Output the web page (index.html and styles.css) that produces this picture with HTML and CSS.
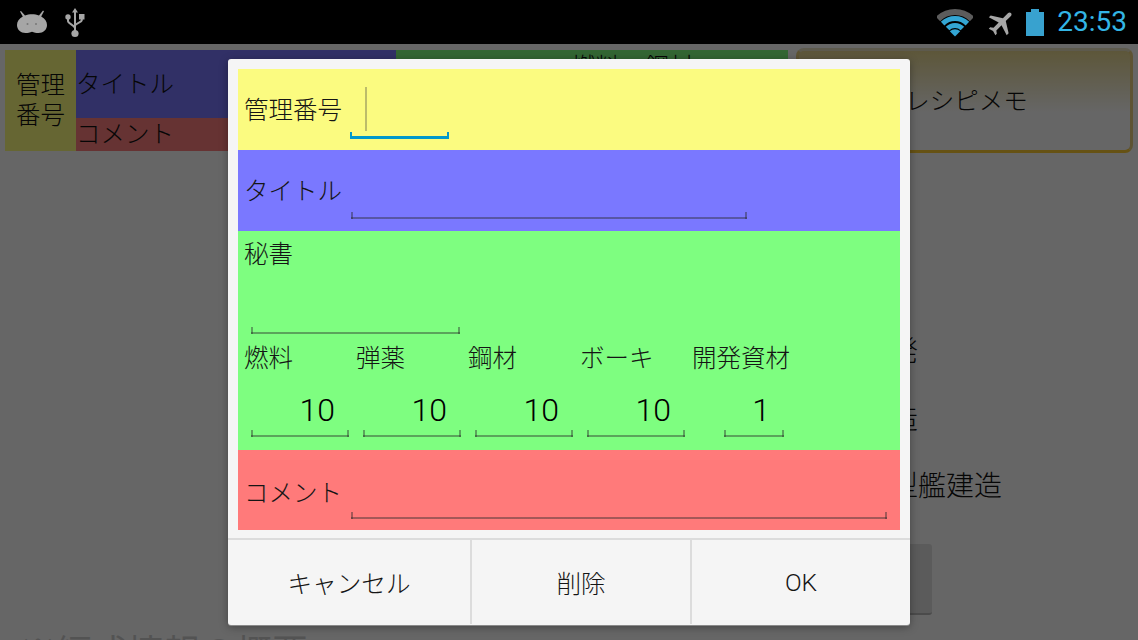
FILE: index.html
```html
<!DOCTYPE html>
<html lang="ja">
<head>
<meta charset="utf-8">
<title>レシピメモ</title>
<link rel="stylesheet" href="styles.css">
</head>
<body>
<header class="statusbar">
  <div class="status-left">
    <svg class="ico-android" width="32" height="24" viewBox="0 0 32 24"><path fill="#a6a6a6" d="M5 1l4 4.600C11 4.600 13.500 4.300 16 4.300s5 .3 7 1.300L27 .6l1 .6-2.800 5.400C29 8.600 31 11.600 31 15c0 4.800-3.800 8-8.500 8-2.400 0-4.500-.6-6.500-1.300-2 .7-4.100 1.300-6.500 1.300C4.800 23 1 19.800 1 15c0-3.400 2-6.400 5.800-8.400L4 1.600z"/><circle cx="11.500" cy="14" r="1" fill="#777"/><circle cx="20" cy="14" r="1" fill="#777"/></svg>
    <svg class="ico-usb" width="20" height="30" viewBox="0 0 20 30"><g fill="#a6a6a6"><path d="M10 0l3 4.500h-2V24H9V4.500H7z"/><circle cx="10" cy="25.500" r="3.600"/><circle cx="3" cy="9" r="2.700"/><rect x="14" y="6" width="5.500" height="5.500"/></g><path fill="none" stroke="#a6a6a6" stroke-width="2" d="M3 10v3c0 2.500 6 4 6.500 6.500M16.800 10v2c0 2.500-6 3-6.800 5.500"/></svg>
  </div>
  <div class="status-right">
    <svg class="ico-wifi" width="36" height="28" viewBox="0 0 36 28"><g fill="none" stroke-width="5"><path stroke="#5c5c5c" stroke-width="6" d="M1.030 10.030a24 24 0 0 1 33.940 0"/><path stroke="#33a6d4" d="M5.630 14.630a17.500 17.500 0 0 1 24.750 0"/><path stroke="#33a6d4" d="M10.580 19.580a10.500 10.500 0 0 1 14.850 0"/></g><path fill="#33a6d4" d="M18 27.500l-5.200-5.200a7.400 7.400 0 0 1 10.400 0z"/></svg>
    <svg class="ico-plane" width="32" height="32" viewBox="0 0 24 24"><path fill="#a6a6a6" transform="rotate(45 12 12)" d="M21 16v-2l-8-5V3.500c0-.83-.67-1.500-1.500-1.500S10 2.670 10 3.500V9l-8 5v2l8-2.500V19l-2 1.500V22l3.500-1 3.500 1v-1.500L13 19v-5.500l8 2.500z"/></svg>
    <svg class="ico-battery" width="18" height="27" viewBox="0 0 18 27"><path fill="#38a2cf" d="M5 0h8v3h5v24H0V3h5z"/></svg>
    <span class="clock">23:53</span>
  </div>
</header>

<main class="page">
  <section class="top">
    <div class="table">
      <div class="cell-no">管理<br>番号</div>
      <div class="cell-title">
        <div class="cell-name">タイトル</div>
        <div class="cell-comment">コメント</div>
      </div>
      <div class="cell-res">燃料・鋼材</div>
    </div>
    <div class="memo-btn">レシピメモ</div>
  </section>
  <ul class="menu">
    <li>開発</li>
    <li>建造</li>
    <li>大型艦建造</li>
  </ul>
  <div class="ghost-btn"></div>
  <h2 class="info">※編成情報の概要</h2>
</main>

<div class="scrim">
  <div class="dialog">
    <div class="form">
      <div class="row row-yellow">
        <span class="label">管理番号</span>
        <div class="field field-active"><span class="cursor"></span></div>
      </div>
      <div class="row row-blue">
        <span class="label">タイトル</span>
        <div class="field field-title"></div>
      </div>
      <div class="green">
        <div class="label">秘書</div>
        <div class="field field-secretary"></div>
        <div class="resources">
          <div class="res"><div class="label">燃料</div><div class="field field-num">10</div></div>
          <div class="res"><div class="label">弾薬</div><div class="field field-num">10</div></div>
          <div class="res"><div class="label">鋼材</div><div class="field field-num">10</div></div>
          <div class="res"><div class="label">ボーキ</div><div class="field field-num">10</div></div>
          <div class="res"><div class="label">開発資材</div><div class="field field-num field-small">1</div></div>
        </div>
      </div>
      <div class="row row-red">
        <span class="label">コメント</span>
        <div class="field field-comment"></div>
      </div>
    </div>
    <div class="actions">
      <div class="action action-cancel">キャンセル</div>
      <div class="action action-delete">削除</div>
      <div class="action action-ok">OK</div>
    </div>
  </div>
</div>
</body>
</html>
```

FILE: styles.css
```css
* { box-sizing: border-box; }
html, body {
  margin: 0;
  width: 1138px;
  height: 640px;
  overflow: hidden;
  background: #fff;
  color: #111;
  font-family: "Roboto", "Noto Sans CJK JP", sans-serif;
  font-size: 24.500px;
  font-weight: 300;
}
.statusbar {
  position: relative;
  z-index: 3;
  height: 44px;
  background: #000;
  display: flex;
  justify-content: space-between;
  align-items: center;
}
.status-left { display: flex; align-items: center; padding-left: 16px; }
.ico-usb { margin-left: 17px; margin-top: 1px; }
.status-right { display: flex; align-items: center; padding-right: 11px; }
.ico-wifi { margin-top: 1px; margin-right: 1px; }
.ico-plane { margin-left: 12px; margin-top: 2px; }
.ico-battery { margin-left: 8px; }
.clock { margin-left: 13px; color: #33b5e5; font-size: 28px; font-weight: 400; line-height: 44px; }

.top {
  display: flex;
  align-items: center;
  padding: 4px 5px 0;
  height: 109px;
  gap: 8px;
}
.table { display: flex; width: 783px; height: 101px; }
.cell-no {
  width: 71px;
  background: #ffff80;
  display: flex;
  align-items: center;
  justify-content: center;
  text-align: center;
  line-height: 30px;
}
.cell-title { width: 320px; display: flex; flex-direction: column; }
.cell-name { height: 68px; background: #7b78ff; line-height: 70px; }
.cell-comment { height: 33px; background: #ff8080; line-height: 34px; }
.cell-res { flex: 1; background: #80ff80; padding-left: 175px; line-height: 34px; padding-top: 1px; }
.memo-btn {
  width: 337px;
  height: 105px;
  border: 3px solid #ffcc33;
  border-top-color: #e8e0c0;
  border-left-color: #e8d080;
  border-right-color: #e8d080;
  border-radius: 8px;
  background: linear-gradient(#e8d890, #fff 62%);
  display: flex;
  align-items: center;
  justify-content: center;
  padding: 0 0 3px 4px;
}
.menu {
  list-style: none;
  margin: 0;
  padding: 165px 0 0 862px;
  font-size: 28px;
}
.menu li { height: 67.500px; line-height: 68px; }
.ghost-btn {
  margin: 23.500px 0 0 300px;
  width: 632px;
  height: 71px;
  background: #e4e4e4;
  border-bottom: 2px solid #bbb;
  border-radius: 3px;
}
.info {
  margin: 16px 0 0 20px;
  font-size: 36px;
  font-weight: 400;
  line-height: 46px;
  color: #d0d0d0;
}

.scrim {
  position: absolute;
  z-index: 2;
  top: 44px;
  left: 0;
  right: 0;
  bottom: 0;
  background: rgba(0, 0, 0, .6);
  display: flex;
  align-items: center;
  justify-content: center;
}
.dialog {
  width: 682px;
  height: 566px;
  background: #f5f5f5;
  border-radius: 3px;
  box-shadow: 0 1px 0 #8a8a8a, 0 2px 8px rgba(0, 0, 0, .35);
  display: flex;
  flex-direction: column;
}
.form { padding: 10px 10px 0; height: 480px; }
.row { display: flex; align-items: flex-start; padding-left: 6px; }
.row-yellow { height: 81px; background: #fbfb80; padding-top: 18px; }
.row-blue { height: 81px; background: #7a78ff; padding-top: 17px; }
.row-red { height: 80px; background: #ff7a7a; padding-top: 17px; }
.row-yellow .label { margin-top: 7px; }
.row-blue .label { margin-top: 8px; }
.row-red .label { margin-top: 10px; }
.label {
  display: block;
  width: 98px;
  flex: none;
  line-height: 34px;
  font-size: 24.500px;
  color: #151515;
  white-space: nowrap;
}
.field {
  --line: rgba(40, 40, 40, .42);
  --thick: 2px;
  flex: none;
  height: 52px;
  margin-left: 9px;
  background:
    linear-gradient(var(--line), var(--line)) left bottom / 100% var(--thick) no-repeat,
    linear-gradient(var(--line), var(--line)) left bottom / 2px 7px no-repeat,
    linear-gradient(var(--line), var(--line)) right bottom / 2px 7px no-repeat;
}
.field-active { --line: #0099cc; --thick: 3px; width: 99px; margin-left: 8px; padding-left: 15px; }
.cursor { display: block; width: 2px; height: 44px; background: #bcbc6a; }
.field-title { width: 396px; }
.field-comment { width: 536px; }
.green { height: 219px; background: #7efe80; padding: 7px 0 0 6px; }
.field-secretary { width: 209px; height: 62px; margin-left: 7px; }
.resources { display: flex; margin-top: 8px; }
.res { width: 112px; }
.field-num {
  width: 98px;
  margin: 9px 0 0 7px;
  padding-right: 14px;
  text-align: right;
  font-size: 32px;
  font-weight: 300;
  line-height: 50px;
  color: #000;
}
.field-small { width: 60px; margin-left: 32px; padding-right: 14px; }
.actions { display: flex; height: 86px; border-top: 2px solid #dcdcdc; margin-top: -1px; }
.action {
  display: flex;
  align-items: center;
  justify-content: center;
  color: #151515;
  font-size: 24.600px;
}
.action-cancel { width: 244px; border-right: 2px solid #dcdcdc; }
.action-delete { width: 220px; border-right: 2px solid #dcdcdc; }
.action-ok { width: 218px; }
```
